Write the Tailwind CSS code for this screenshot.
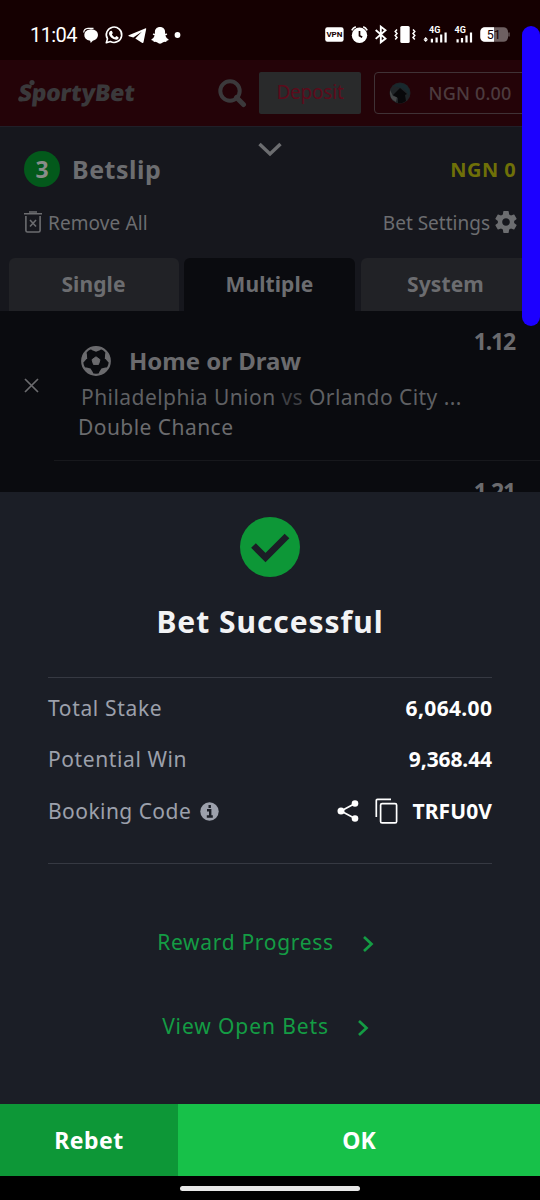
<!DOCTYPE html>
<html lang="en">
<head>
<meta charset="utf-8">
<title>SportyBet</title>
<script src="https://cdn.jsdelivr.net/npm/@tailwindcss/browser@4"></script>
</head>
<body class="bg-black">
<div class="relative w-[540px] h-[1200px] overflow-hidden flex flex-col whitespace-nowrap font-['Noto_Sans','Open_Sans',sans-serif] bg-[#0a0b0f]">

  <!-- Status bar -->
  <div class="h-[60px] shrink-0 bg-[#150001] flex items-center pl-[30px] pr-[30px] pt-[9px] text-white">
    <span class="w-[47px] text-[20px] leading-none font-['Roboto',sans-serif] tracking-[-0.6px]">11:04</span>
    <svg class="ml-[5px] shrink-0" width="102" height="22" viewBox="82 23 102 22" fill="#fff">
      <path d="M85.500 30.500q1.500-2 5.500-2.200 3.500 0 5.300 1.600Q98 31.500 98 34q0 2.400-1.700 4-1.500 1.300-3.500 1.700L90.700 42l-.5-2.200q-3.200-.2-4.700-2.300-1.300-1.700-1.200-3.800.1-1.800 1.200-3.200z"/>
      <path d="M83.700 31.500q.3-3.800 4.300-4.100l5.500-.1" stroke="#fff" stroke-width="1.200" fill="none"/>
      <path d="M106.300 41.800l1.200-4a7.700 7.700 0 1 1 2.900 2.700z" fill="none" stroke="#fff" stroke-width="1.600" stroke-linejoin="round"/>
      <path d="M110 30.300q1-1 1.900-.3l.9 2.100-.9 1.400q1.100 2 3.100 2.900l1.300-1.300 2.200 1.100q.4 2.200-2.300 2.500-5.900-.9-7.200-5.700-.1-1.500 1-2.700z"/>
      <path d="M145.700 27.300l-17 6.900q-1 .6.200 1l4.400 1.400 8.500-5.800-6.500 6.600 7 4.600q1 .3 1.200-.7l2.700-13.300q.1-1.100-.5-.7z"/>
      <path d="M160 26c3.200 0 5.200 2.200 5.100 5.200v1.500l1.700-.3q1 .7-.2 1.500l-1.300.7q.8 2.700 3.400 3.800.2.900-2 1.300l-.6 1.200q-2.300-.3-3 .4-1.600 1.400-3.100 1.400t-3.100-1.400q-.7-.7-3-.4l-.6-1.200q-2.200-.4-2-1.300 2.600-1.100 3.400-3.800l-1.300-.7q-1.200-.8-.2-1.500l1.700.3v-1.500c-.1-3 1.900-5.200 5.100-5.200z"/>
      <circle cx="177.500" cy="34" r="2.900"/>
    </svg>
    <svg class="ml-auto shrink-0" width="186" height="24" viewBox="324 23 186 24" fill="#fff">
      <rect x="325.200" y="27.300" width="18.400" height="14.400" rx="2.200"/>
      <text x="334.400" y="37.400" font-family="Roboto" font-size="8" font-weight="700" fill="#150001" text-anchor="middle">VPN</text>
      <circle cx="359.500" cy="35.200" r="7.700"/>
      <path d="M351.800 30.300a7 7 0 0 1 4-3.500M367.200 30.300a7 7 0 0 0-4-3.500" fill="none" stroke="#fff" stroke-width="1.600"/>
      <path d="M359.500 31v4.700l2.700 1.600" fill="none" stroke="#150001" stroke-width="1.700"/>
      <path d="M375.700 30l9.800 8.600-4.700 3.700V26.600l4.700 3.600-9.800 8.700" fill="none" stroke="#fff" stroke-width="1.900"/>
      <rect x="400.300" y="26" width="9.400" height="17" rx="1.600"/>
      <path d="M397 29.500l-1.800 2 1.800 2-1.800 2 1.800 2-1.800 2M413 29.500l1.800 2-1.800 2 1.800 2-1.800 2 1.800 2" fill="none" stroke="#fff" stroke-width="1.500"/>
      <text x="429" y="33.400" font-family="Roboto" font-size="9" font-weight="700">4G</text>
      <path d="M425.700 37l2.200 2.400h-4.400zM425.700 42l2.200-2.200h-4.400z"/>
      <path d="M431.900 42.600v-3.800M436.600 42.600v-5M441.200 42.600v-8M445.600 42.600v-10" stroke="#fff" stroke-width="2.200"/>
      <text x="454.500" y="33.400" font-family="Roboto" font-size="9" font-weight="700">4G</text>
      <path d="M457.600 42.600v-3.300M462 42.600v-4.600M466.500 42.600v-7M471 42.600v-10" stroke="#fff" stroke-width="2.200"/>
      <rect x="480.300" y="27.300" width="27.700" height="14.400" rx="4.500" fill="#6e6061"/>
      <path d="M484.800 27.300H494v14.400h-9.200a4.500 4.500 0 0 1-4.500-4.500v-5.400a4.500 4.500 0 0 1 4.500-4.500z"/>
      <path d="M509 32.500v4" stroke="#6e6061" stroke-width="1.300"/>
      <text x="493.700" y="39" font-family="Roboto" font-size="12.500" fill="#150001" text-anchor="middle">51</text>
    </svg>
  </div>

  <!-- Site header -->
  <div class="h-[66px] shrink-0 bg-[#240308] flex items-center pl-[18px]">
    <div class="relative w-[120px] shrink-0 h-[34px] text-[#3a393b]">
      <span class="block pl-[1px] text-[23px] leading-[32px] font-black -skew-x-6 tracking-[-0.3px]">SportyBet</span>
      <svg class="absolute left-0 top-0" width="20" height="30" fill="#3a393b"><circle cx="14" cy="6.500" r="2.600"/><circle cx="2.800" cy="23" r="2.600"/></svg>
    </div>
    <svg class="ml-[79px] shrink-0" width="30" height="30" viewBox="0 0 30 30" fill="none" stroke="#3b393b"><circle cx="13" cy="13" r="9.700" stroke-width="4"/><path d="M19.500 19.500l7 7" stroke-width="5" stroke-linecap="round"/></svg>
    <div class="ml-[12px] w-[102px] shrink-0 h-[42px] rounded-[2px] bg-[#292a2b] text-[#5c0b1b] text-[19px] leading-[41px] text-center tracking-[-0.2px]">Deposit</div>
    <div class="ml-[12.500px] w-[180px] shrink-0 h-[42px] rounded-[4px] border border-[#403236] flex items-center pl-[14px]">
      <svg class="shrink-0" width="22" height="22" viewBox="0 0 22 22"><circle cx="11" cy="11" r="10.500" fill="#202427"/><path d="M4 4Q10-1 17 3q5 5 3 11-3-7-8-8Q9 5 4 4z" fill="#18292e"/><path d="M1 8q-1 9 6 12l1-5-4-1z" fill="#454748"/><path d="M4 13l7-7 7 6-2 1 1 6q-4 3-8 2v-5z" fill="#08080a"/></svg>
      <span class="ml-[18px] text-[18px] leading-[40px] text-[#4c3b3e] font-medium tracking-[0.2px]">NGN 0.00</span>
    </div>
  </div>

  <!-- Betslip heading -->
  <div class="relative h-[185px] shrink-0 bg-[#16171d] border-t border-[#201f28] flex flex-col">
    <svg class="absolute left-[256px] top-[13px]" width="28" height="20" fill="none" stroke="#6c6d70" stroke-width="3.400"><path d="M3.500 4L14 14 24.500 4"/></svg>
    <div class="mt-[24px] h-[36px] pl-[24px] pr-[24px] flex items-center">
      <div class="size-[36px] rounded-full bg-[#03591b] text-[#898d8a] text-[23px] leading-[36px] font-bold text-center">3</div>
      <div class="ml-[12px] text-[25px] leading-[36px] font-bold text-[#6c6d70] tracking-[0.5px]">Betslip</div>
      <div class="ml-auto text-[20px] leading-[36px] font-bold text-[#6f7008] tracking-[0.4px] mt-[2px]">NGN 0</div>
    </div>
    <div class="mt-[21px] h-[28px] pl-[23px] pr-[23px] flex items-center text-[#6c6d70] text-[19px] leading-[28px]">
      <svg class="shrink-0" width="20" height="24" viewBox="0 0 20 24" fill="none" stroke="#6c6d70" stroke-width="1.600"><path d="M1 3.800h18M6 2h8M2.900 6v14.400q0 1.600 1.600 1.600h11q1.600 0 1.600-1.600V6M7 10l6 6.500M13 10l-6 6.500"/></svg>
      <span class="ml-[5px] tracking-[0.1px] mt-px">Remove All</span>
      <span class="ml-auto mt-px">Bet Settings</span>
      <svg class="ml-[5px] shrink-0" width="22" height="24" viewBox="2 1 20 22" fill="#6c6d70"><path d="M19.430 12.980c.04-.32.070-.64.070-.98s-.03-.66-.07-.98l2.110-1.650c.19-.15.24-.42.120-.64l-2-3.460c-.12-.22-.39-.3-.61-.22l-2.490 1c-.52-.4-1.080-.73-1.690-.98l-.38-2.650C14.460 2.180 14.250 2 14 2h-4c-.25 0-.46.180-.49.420l-.38 2.650c-.61.250-1.170.590-1.690.980l-2.490-1c-.23-.09-.49 0-.61.220l-2 3.460c-.13.220-.07.490.120.640l2.110 1.650c-.04.320-.07.650-.07.980s.03.660.070.980l-2.110 1.650c-.19.150-.24.420-.12.640l2 3.460c.12.220.39.300.61.220l2.490-1c.52.400 1.080.730 1.690.980l.38 2.650c.03.240.24.420.49.420h4c.25 0 .46-.18.490-.42l.38-2.650c.61-.25 1.170-.59 1.690-.98l2.490 1c.23.090.49 0 .61-.22l2-3.460c.12-.22.070-.49-.12-.64zM12 15.500c-1.930 0-3.500-1.570-3.500-3.500s1.570-3.500 3.500-3.500 3.500 1.570 3.500 3.500-1.570 3.500-3.500 3.500z"/></svg>
    </div>
    <div class="mt-auto h-[53px] pl-[9px] flex text-center text-[21px] leading-[53px] font-bold tracking-[0.1px] text-[#6c6d70]">
      <div class="w-[170px] shrink-0 pr-px rounded-t-[6px] bg-[#212226]">Single</div>
      <div class="ml-[5px] w-[171px] shrink-0 rounded-t-[6px] bg-[#0a0b0f]">Multiple</div>
      <div class="ml-[6px] w-[180px] shrink-0 pr-[11px] rounded-t-[6px] bg-[#212226]">System</div>
    </div>
  </div>

  <!-- Selections -->
  <div class="h-[181px] shrink-0 overflow-hidden bg-[#0a0b0f] text-[#6b6b6e]">
    <div class="h-[150px] flex">
      <svg class="mt-[67px] ml-[24px] shrink-0" width="15" height="15" stroke="#6b6b6e" stroke-width="1.700"><path d="M1 1l13 13M14 1L1 14"/></svg>
      <div class="ml-[15px] flex-1 border-b border-[#17181c] pl-[24px] relative">
        <div class="absolute right-[25px] top-[15px] text-[23px] leading-[30px] font-bold tracking-[-1.200px]">1.12</div>
        <div class="mt-[34px] ml-[3px] h-[32px] flex items-center">
          <svg class="shrink-0" width="30" height="30" viewBox="-15 -15 30 30">
            <circle r="13.800" fill="none" stroke="#6b6b6e" stroke-width="2.200"/>
            <g fill="#6b6b6e">
              <path d="M0-4.200L4-1.300 2.500 3.400h-5L-4-1.300z" stroke="#6b6b6e" stroke-linejoin="round"/>
              <path id="patch" d="M-6.200-12.500L-3.800-10.800 0-9.300 3.800-10.800 6.200-12.500 0-14.500z"/>
              <use href="#patch" transform="rotate(72)"/>
              <use href="#patch" transform="rotate(144)"/>
              <use href="#patch" transform="rotate(216)"/>
              <use href="#patch" transform="rotate(288)"/>
            </g>
          </svg>
          <span class="ml-[18px] text-[24px] leading-[32px] font-bold">Home or Draw</span>
        </div>
        <div class="mt-[4px] ml-[3px] text-[21px] leading-[32px] tracking-[0.45px] text-[#5f6063]">Philadelphia Union <span class="text-[#3e3f43]">vs</span> Orlando City ...</div>
        <div class="-mt-[1px] text-[21px] leading-[30px] tracking-[0.45px]">Double Chance</div>
      </div>
    </div>
    <div class="h-[31px] pr-[25px] pt-[15px] text-right text-[23px] leading-[30px] font-bold tracking-[-1.200px]">1.21</div>
  </div>

  <!-- Confirmation sheet -->
  <div class="h-[612px] shrink-0 bg-[#1b1e26] px-[48px] flex flex-col items-center">
    <svg class="mt-[25px] shrink-0" width="60" height="60"><circle cx="30" cy="30" r="30" fill="#0d9737"/><path d="M13.500 28.500l12 12L47 19" fill="none" stroke="#1b1e26" stroke-width="6.600"/></svg>
    <div class="mt-[23px] text-[30px] leading-[44px] font-bold text-[#f2f3f5] tracking-[0.95px]">Bet Successful</div>
    <div class="mt-[33px] w-full h-[187px] border-y border-[#363942] text-[21px] leading-[30px] text-[#9ca0ab] pt-[15px]">
      <div class="flex justify-between tracking-[0.65px]"><span>Total Stake</span><span class="text-white font-bold tracking-[0.35px] -mr-[0.35px]">6,064.00</span></div>
      <div class="mt-[21px] flex justify-between tracking-[0.6px]"><span>Potential Win</span><span class="text-white font-bold tracking-[-0.1px]">9,368.44</span></div>
      <div class="mt-[22px] flex items-center tracking-[0.45px]">
        <span>Booking Code</span>
        <svg class="ml-[9px] shrink-0" width="19" height="19"><circle cx="9.500" cy="9.500" r="9.200" fill="#9ca0ab"/><path d="M9.700 3v3M7 8.200h3.200v6M6.800 14.500h6" stroke="#1b1e26" stroke-width="2.400" fill="none"/></svg>
        <svg class="ml-auto shrink-0" width="22" height="24" viewBox="0 0 22 24" fill="#fff"><path d="M18 4.500L4 12l14 7.500" fill="none" stroke="#fff" stroke-width="1.700"/><circle cx="4" cy="12" r="3.500"/><circle cx="18" cy="4.500" r="3.300"/><circle cx="18" cy="19.500" r="3.300"/></svg>
        <svg class="ml-[16px] shrink-0" width="23" height="26" fill="none" stroke="#fff" stroke-width="1.700"><path d="M1.300 19V2.500q0-1.200 1.200-1.200H16"/><rect x="5.600" y="5.600" width="16" height="19.300" rx="1.500"/></svg>
        <span class="ml-[14.500px] text-white font-bold tracking-[0.1px]">TRFU0V</span>
      </div>
    </div>
    <div class="mt-[63px] ml-[-9px] h-[30px] flex items-center text-[21px] leading-[30px] tracking-[0.7px] text-[#149c44]">Reward Progress
      <svg class="ml-[28px] mt-[3px]" width="12" height="18" fill="none" stroke="#149c44" stroke-width="2.700"><path d="M2 2l7.500 7L2 16"/></svg></div>
    <div class="mt-[54px] ml-[-9px] h-[30px] flex items-center text-[21px] leading-[30px] tracking-[0.9px] text-[#149c44]">View Open Bets
      <svg class="ml-[28px] mt-[3px]" width="12" height="18" fill="none" stroke="#149c44" stroke-width="2.700"><path d="M2 2l7.500 7L2 16"/></svg></div>
  </div>

  <!-- Actions -->
  <div class="h-[72px] shrink-0 flex text-center text-white text-[23px] leading-[72px] font-bold">
    <div class="w-[178px] bg-[#0d9737] tracking-[0.5px]">Rebet</div>
    <div class="flex-1 bg-[#17c149]">OK</div>
  </div>
  <div class="h-[24px] shrink-0 bg-black flex justify-center pt-[10px]"><div class="w-[180px] h-[5px] rounded-full bg-[#e8e8e8]"></div></div>

  <div class="absolute left-[522px] top-[26px] w-[18px] h-[300px] rounded-full bg-[#1c00ff]"></div>
</div>
</body>
</html>
